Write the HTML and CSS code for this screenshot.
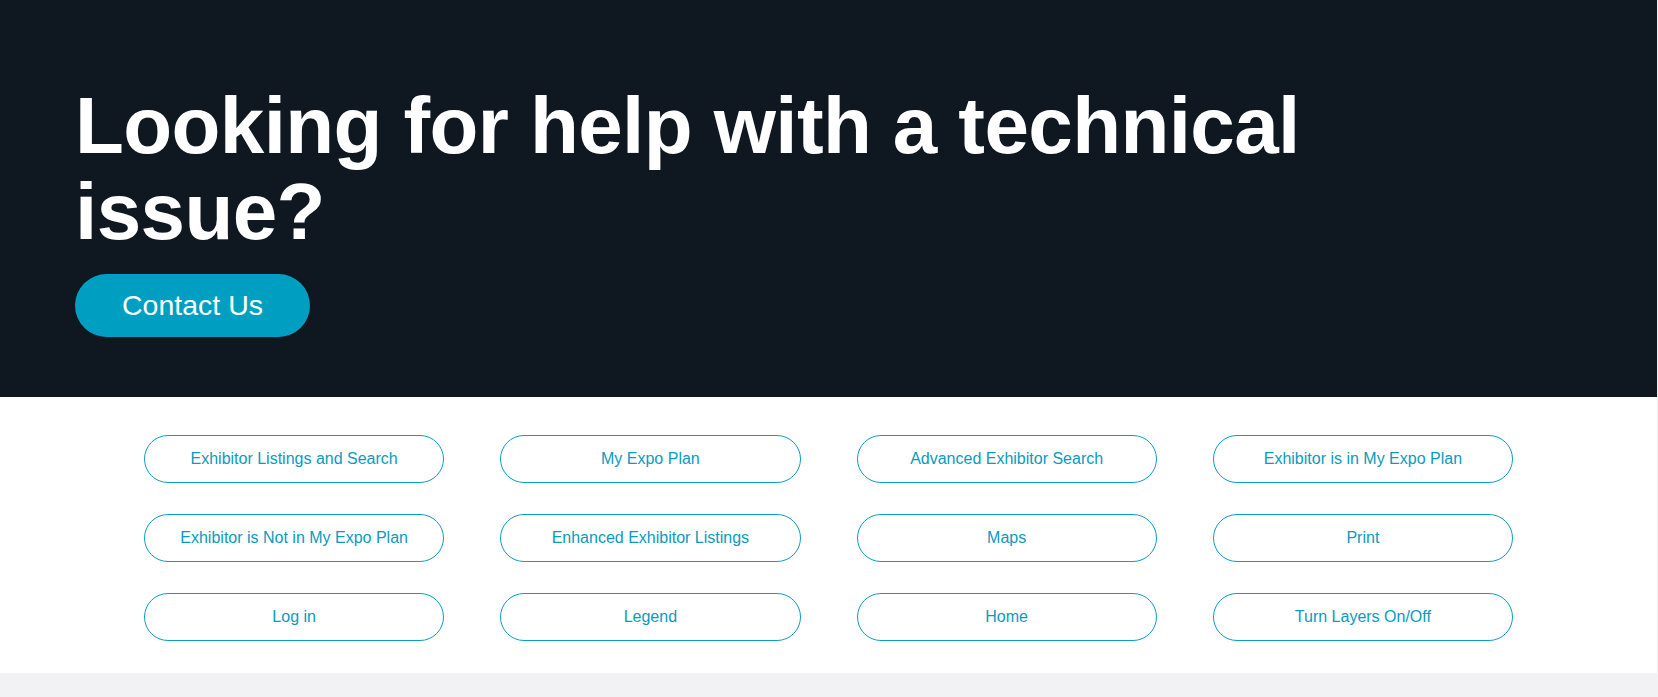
FILE: index.html
```html
<!DOCTYPE html>
<html lang="en">
<head>
<meta charset="utf-8">
<title>Looking for help with a technical issue?</title>
<link rel="stylesheet" href="styles.css">
</head>
<body>
<div class="page">
  <section class="hero">
    <h1 class="hero-title">Looking for help with a technical issue?</h1>
    <a class="contact-btn" href="#">Contact Us</a>
  </section>
  <section class="links">
    <div class="links-grid">
      <a class="link-btn" href="#">Exhibitor Listings and Search</a>
      <a class="link-btn" href="#">My Expo Plan</a>
      <a class="link-btn" href="#">Advanced Exhibitor Search</a>
      <a class="link-btn" href="#">Exhibitor is in My Expo Plan</a>
      <a class="link-btn" href="#">Exhibitor is Not in My Expo Plan</a>
      <a class="link-btn" href="#">Enhanced Exhibitor Listings</a>
      <a class="link-btn" href="#">Maps</a>
      <a class="link-btn" href="#">Print</a>
      <a class="link-btn" href="#">Log in</a>
      <a class="link-btn" href="#">Legend</a>
      <a class="link-btn" href="#">Home</a>
      <a class="link-btn" href="#">Turn Layers On/Off</a>
    </div>
  </section>
</div>
</body>
</html>
```
FILE: styles.css
```css
html, body {
  margin: 0;
  padding: 0;
}
body {
  background: #f2f2f4;
  font-family: "Liberation Sans", Arial, sans-serif;
  min-height: 697px;
}
.page {
  width: 1657px;
}
.hero {
  background: #0f1720;
  height: 397px;
  box-sizing: border-box;
  padding: 83px 0 0 75px;
}
.hero-title {
  margin: 0;
  max-width: 1400px;
  color: #ffffff;
  font-size: 80px;
  font-weight: 700;
  line-height: 86px;
  letter-spacing: -0.6px;
}
.contact-btn {
  display: inline-flex;
  align-items: center;
  justify-content: center;
  margin-top: 19px;
  width: 235px;
  height: 63px;
  border-radius: 32px;
  background: #009fc2;
  color: #ffffff;
  font-size: 28.5px;
  text-decoration: none;
}
.links {
  background: #ffffff;
  height: 276px;
  box-sizing: border-box;
  padding-top: 38px;
  display: flex;
  justify-content: center;
}
.links-grid {
  width: 1369px;
  display: grid;
  grid-template-columns: repeat(4, 1fr);
  column-gap: 56px;
  row-gap: 31px;
  align-content: start;
}
.link-btn {
  display: flex;
  align-items: center;
  justify-content: center;
  height: 48px;
  box-sizing: border-box;
  border: 1px solid #0a9ec2;
  border-radius: 24px;
  color: #0a9bc0;
  font-size: 16px;
  text-decoration: none;
  background: #ffffff;
}
```
